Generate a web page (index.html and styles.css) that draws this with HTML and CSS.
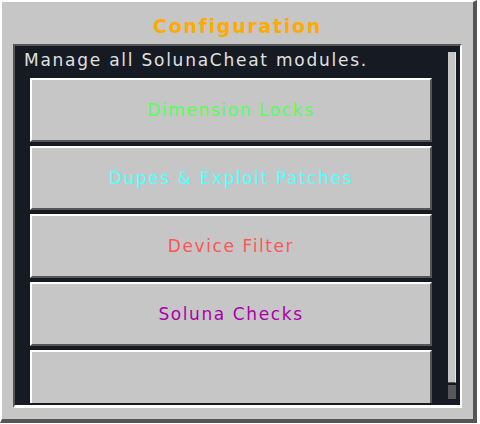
FILE: index.html
```html
<!DOCTYPE html>
<html>
<head>
<meta charset="utf-8">
<link rel="stylesheet" href="styles.css">
</head>
<body>
<div class="frame">
  <div class="title">Configuration</div>
  <div class="panel">
    <div class="content">
      <div class="desc">Manage all SolunaCheat modules.</div>
      <div class="buttons">
        <div class="btn green">Dimension Locks</div>
        <div class="btn cyan">Dupes &amp; Exploit Patches</div>
        <div class="btn red">Device Filter</div>
        <div class="btn purple">Soluna Checks</div>
        <div class="btn"></div>
      </div>
    </div>
    <div class="scrollbar">
      <div class="thumb"></div>
      <div class="track"></div>
    </div>
  </div>
</div>
</body>
</html>
```
FILE: styles.css
```css
html, body {
  margin: 0;
  padding: 0;
  background: #ffffff;
}
body {
  width: 480px;
  height: 424px;
  overflow: hidden;
  font-family: "DejaVu Sans", sans-serif;
}
.frame {
  width: 477px;
  height: 423px;
  box-sizing: border-box;
  background: #c6c6c6;
  border-top: 2px solid #ffffff;
  border-left: 2px solid #ffffff;
  border-right: 4px solid #555555;
  border-bottom: 4px solid #555555;
  padding: 0 11px 11px 11px;
  display: flex;
  flex-direction: column;
}
.title {
  height: 42px;
  box-sizing: border-box;
  padding-top: 6px;
  display: flex;
  align-items: center;
  justify-content: center;
  color: #ffaa00;
  font-weight: bold;
  font-size: 19px;
  letter-spacing: 1.7px;
  flex: none;
}
.panel {
  flex: 1;
  min-height: 0;
  display: flex;
  background: #161a22;
  border-top: 2px solid #555555;
  border-left: 2px solid #555555;
  border-right: 2px solid #ffffff;
  border-bottom: 3px solid #ffffff;
}
.content {
  flex: 1;
  min-width: 0;
  overflow: hidden;
  margin-bottom: 2px;
  padding: 4px 16px 0 15px;
}
.desc {
  height: 20px;
  line-height: 20px;
  margin-left: -6px;
  margin-bottom: 8px;
  color: #e0e0e0;
  font-size: 17px;
  letter-spacing: 1.75px;
  white-space: nowrap;
}
.buttons {
  display: flex;
  flex-direction: column;
  gap: 4px;
}
.btn {
  height: 64px;
  flex: none;
  box-sizing: border-box;
  background: #c6c6c6;
  border-style: solid;
  border-width: 2px;
  border-color: #ffffff #555555 #555555 #ffffff;
  display: flex;
  align-items: center;
  justify-content: center;
  font-size: 17px;
  letter-spacing: 1.6px;
  white-space: nowrap;
}
.green { color: #55ff55; }
.cyan { color: #55ffff; }
.red { color: #ff5555; }
.purple { color: #aa00aa; }
.scrollbar {
  width: 8px;
  flex: none;
  margin: 6px 4px 6px 0;
  display: flex;
  flex-direction: column;
}
.thumb {
  flex: 1;
  background: #c6c6c6;
  border-right: 1px solid #e6e6e6;
  border-bottom: 1px solid #555555;
}
.track {
  height: 14px;
  margin-top: 2px;
  background: #585858;
}
```
